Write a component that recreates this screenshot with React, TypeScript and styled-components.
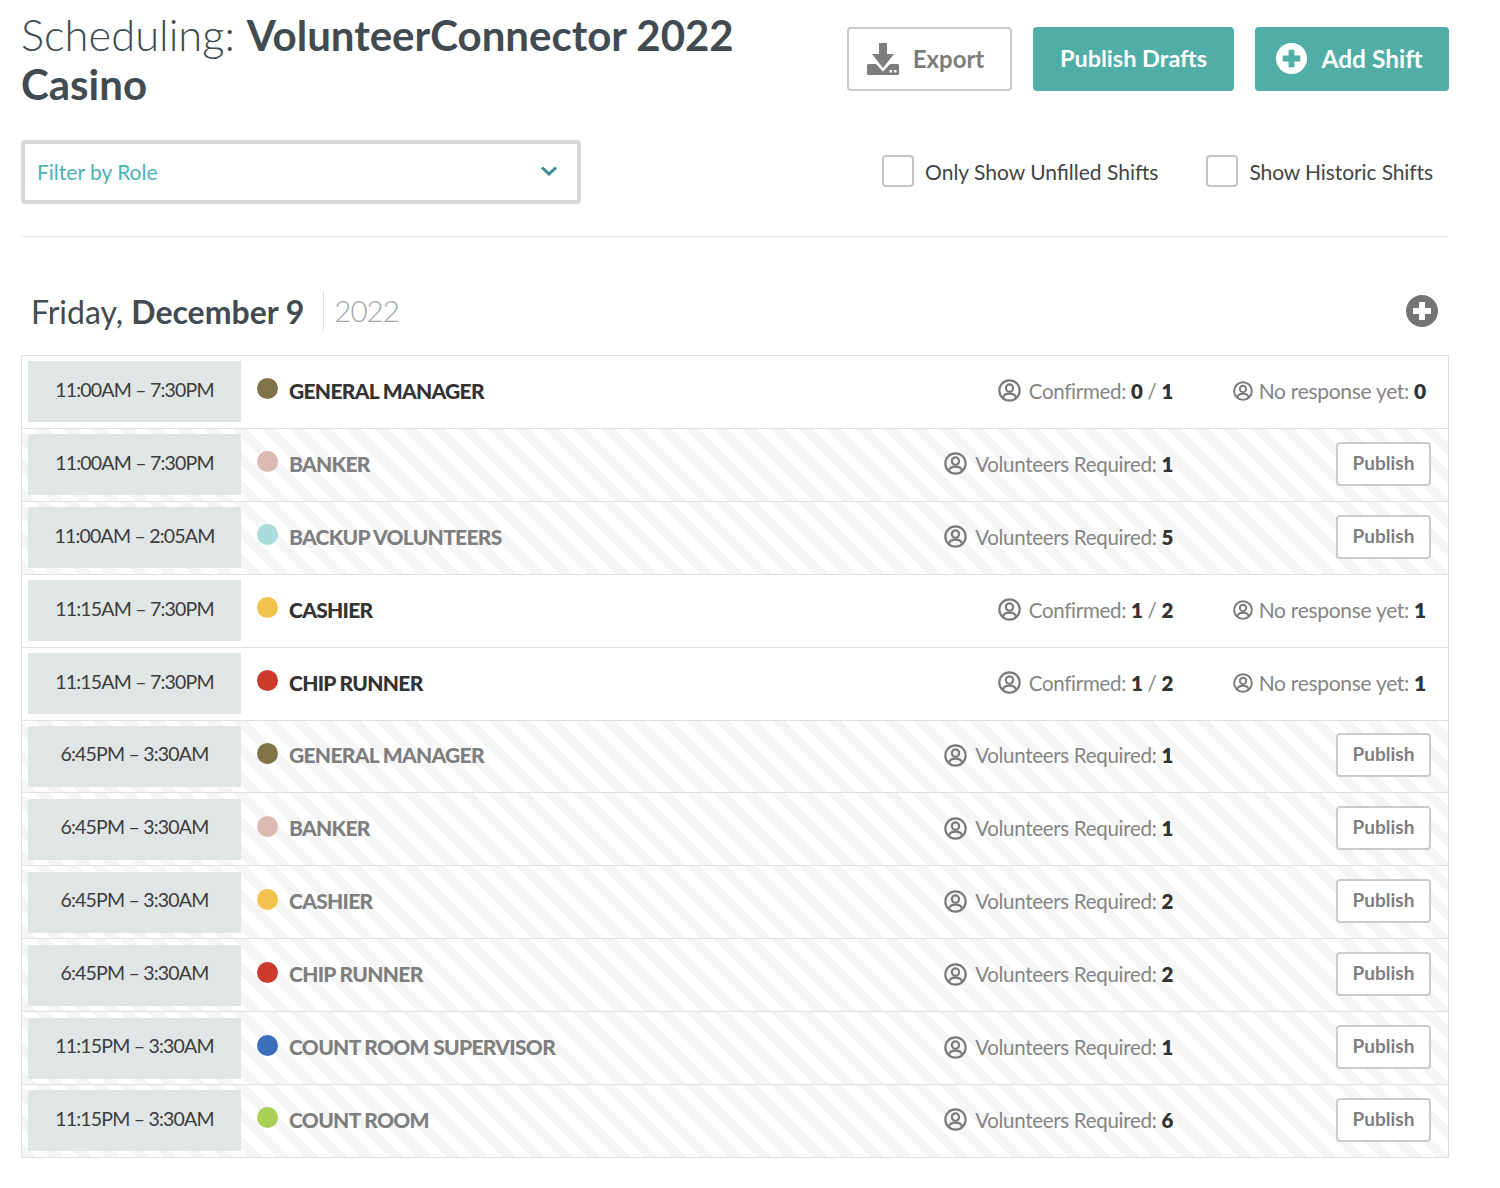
import styled, { createGlobalStyle } from 'styled-components';

const GlobalStyle = createGlobalStyle`
  html, body {
    margin: 0;
    padding: 0;
    background: #fff;
    font-family: Lato, "Liberation Sans", sans-serif;
  }
`;

const Page = styled.div`
  width: 1428px;
  margin-left: 21px;
  padding-top: 10px;
  padding-bottom: 30px;
`;

const Header = styled.header`
  display: flex;
  justify-content: space-between;
  align-items: flex-start;
  height: 119px;
`;

const Title = styled.h1`
  margin: 0;
  width: 780px;
  font-size: 43.5px;
  line-height: 48px;
  font-weight: 300;
  color: #414b51;
  b {
    font-weight: 700;
    font-size: 42px;
  }
`;

const Actions = styled.div`
  display: flex;
  gap: 21px;
  margin-top: 17px;
`;

const ActionButton = styled.button<{
  $primary?: boolean;
  $width: number;
  $nudge?: number;
  $size?: number;
}>`
  display: flex;
  align-items: center;
  justify-content: center;
  gap: 14px;
  width: ${p => p.$width}px;
  height: 64px;
  box-sizing: border-box;
  border-radius: 4px;
  border: 2px solid ${p => (p.$primary ? '#50aea6' : '#c9c9c9')};
  background: ${p => (p.$primary ? '#50aea6' : '#fff')};
  color: ${p => (p.$primary ? '#fff' : '#7d7d7d')};
  font-family: inherit;
  font-size: ${p => p.$size || 23.5}px;
  font-weight: 700;
  padding: 0 ${p => p.$nudge || 0}px 2px 0;
`;

const ExportGlyph = styled.svg`
  margin-top: 2px;
`;

const FilterRow = styled.div`
  display: flex;
  justify-content: space-between;
  align-items: center;
  margin-top: 11px;
  padding-right: 16px;
  padding-bottom: 32px;
  border-bottom: 1px solid #e8e8e8;
`;

const Select = styled.div`
  display: flex;
  align-items: center;
  justify-content: space-between;
  box-sizing: border-box;
  width: 560px;
  height: 64px;
  padding: 0 20px 2px 12px;
  border: 4px solid #d8d8d8;
  border-radius: 4px;
  color: #4fb0b4;
  font-size: 21px;
`;

const Checks = styled.div`
  display: flex;
  gap: 48px;
  margin-bottom: 2px;
`;

const CheckLabel = styled.label<{ $tight?: boolean }>`
  display: flex;
  align-items: center;
  gap: 11px;
  font-size: 21px;
  letter-spacing: ${p => (p.$tight ? '-0.1px' : '0')};
  color: #444;
`;

const CheckBox = styled.span`
  width: 32px;
  height: 32px;
  box-sizing: border-box;
  border: 2px solid #c4c4c4;
  border-radius: 4px;
`;

const DateHeader = styled.div`
  display: flex;
  align-items: center;
  height: 40px;
  margin-top: 54px;
  margin-bottom: 24px;
  padding: 0 11px 0 10px;
`;

const DateText = styled.h2`
  margin: 0;
  padding-right: 19px;
  font-size: 32px;
  font-weight: 400;
  color: #414b51;
  b {
    font-weight: 700;
  }
`;

const YearText = styled.span`
  flex: 1;
  height: 40px;
  line-height: 40px;
  padding-left: 10px;
  border-left: 1px solid #dedede;
  font-size: 29.5px;
  letter-spacing: -1px;
  font-weight: 300;
  color: #a6a6a6;
`;

const Table = styled.div`
  border: 1px solid #e0e0e0;
  border-bottom: 0;
`;

const Row = styled.div<{ $draft?: boolean }>`
  display: flex;
  align-items: center;
  box-sizing: border-box;
  height: 72.91px;
  padding: 5.4px 0 5.51px 6px;
  border-bottom: 1px solid #e0e0e0;
  background: ${p =>
    p.$draft
      ? 'repeating-linear-gradient(45deg, #f5f5f5 0 10px, #fff 10px 20px)'
      : '#fff'};
`;

const TimeBox = styled.div`
  display: flex;
  align-items: center;
  justify-content: center;
  flex: none;
  width: 213px;
  height: 61px;
  padding-bottom: 5px;
  box-sizing: border-box;
  background: #e0e5e6;
  color: #3c3c3c;
  font-size: 19.5px;
  letter-spacing: -0.8px;
`;

const Dot = styled.span<{ $color: string }>`
  flex: none;
  width: 21px;
  height: 21px;
  margin: 0 11px 6px 16px;
  border-radius: 50%;
  background: ${p => p.$color};
`;

const RoleName = styled.div<{ $draft?: boolean }>`
  flex: 1;
  padding-bottom: 3px;
  font-size: 21px;
  font-weight: 900;
  letter-spacing: -0.7px;
  color: ${p => (p.$draft ? '#7f7f7f' : '#333')};
`;

const Stat = styled.div`
  display: flex;
  align-items: center;
  gap: 8px;
  padding-bottom: 2px;
  font-size: 20.5px;
  letter-spacing: -0.3px;
  color: #858585;
  white-space: nowrap;
  b {
    color: #333;
    font-weight: 800;
  }
`;

const Side = styled.div`
  display: flex;
  justify-content: flex-end;
  flex: none;
  width: 275px;
  padding-right: 17px;
  box-sizing: border-box;
`;

const ResponseStat = styled(Stat)`
  gap: 6px;
  padding-right: 5px;
  font-size: 21px;
`;

const PublishButton = styled.button`
  width: 95px;
  height: 44px;
  margin-bottom: 2px;
  box-sizing: border-box;
  border: 2px solid #cbcbcb;
  border-radius: 4px;
  background: #fff;
  color: #7f7f7f;
  font-family: inherit;
  font-size: 19px;
  font-weight: 700;
  padding: 0 0 3px;
`;

const DownloadIcon = () => (
  <ExportGlyph width="32" height="32" viewBox="0 0 32 32" fill="#7d7d7d">
    <path d="M12 0h8v11h7L16 25 5 11h7z" />
    <path d="M1.500 21h7.500l7 7.500 7-7.500h7.500a1.500 1.500 0 0 1 1.500 1.500V30.500a1.500 1.500 0 0 1-1.500 1.500H1.500A1.500 1.500 0 0 1 0 30.500V22.500A1.500 1.500 0 0 1 1.500 21z" />
    <rect x="22.500" y="27" width="2.500" height="2.500" fill="#fff" />
    <rect x="27" y="27" width="2.500" height="2.500" fill="#fff" />
  </ExportGlyph>
);

const PlusCircle = ({ fill, cross, size }: { fill: string; cross: string; size: number }) => (
  <svg width={size} height={size} viewBox="0 0 32 32">
    <circle cx="16" cy="16" r="16" fill={fill} />
    <path d="M13 7h6v6h6v6h-6v6h-6v-6H7v-6h6z" fill={cross} />
  </svg>
);

const PersonIcon = ({ size }: { size: number }) => (
  <svg width={size} height={size} viewBox="0 0 24 24" fill="none" stroke="#7a7a7a" strokeWidth="2.3">
    <circle cx="12" cy="12" r="10.6" />
    <circle cx="12" cy="9.500" r="3.800" />
    <path d="M5.200 19.500c.6-2.800 3.400-4.200 6.800-4.200s6.200 1.400 6.800 4.200" />
  </svg>
);

type Shift = {
  time: string;
  color: string;
  role: string;
  required?: number;
  confirmed?: string;
  noResponse?: number;
};

const olive = '#7f7548';
const rose = '#dcb9b1';
const aqua = '#aadcdc';
const amber = '#f3c24c';
const red = '#cb3a2b';
const blue = '#3b6fbe';
const lime = '#a9d155';

const shifts: Shift[] = [
  { time: '11:00AM – 7:30PM', color: olive, role: 'GENERAL MANAGER', confirmed: '0 / 1', noResponse: 0 },
  { time: '11:00AM – 7:30PM', color: rose, role: 'BANKER', required: 1 },
  { time: '11:00AM – 2:05AM', color: aqua, role: 'BACKUP VOLUNTEERS', required: 5 },
  { time: '11:15AM – 7:30PM', color: amber, role: 'CASHIER', confirmed: '1 / 2', noResponse: 1 },
  { time: '11:15AM – 7:30PM', color: red, role: 'CHIP RUNNER', confirmed: '1 / 2', noResponse: 1 },
  { time: '6:45PM – 3:30AM', color: olive, role: 'GENERAL MANAGER', required: 1 },
  { time: '6:45PM – 3:30AM', color: rose, role: 'BANKER', required: 1 },
  { time: '6:45PM – 3:30AM', color: amber, role: 'CASHIER', required: 2 },
  { time: '6:45PM – 3:30AM', color: red, role: 'CHIP RUNNER', required: 2 },
  { time: '11:15PM – 3:30AM', color: blue, role: 'COUNT ROOM SUPERVISOR', required: 1 },
  { time: '11:15PM – 3:30AM', color: lime, role: 'COUNT ROOM', required: 6 },
];

const ShiftRow = ({ shift }: { shift: Shift }) => {
  const draft = shift.required !== undefined;
  const [done, total] = (shift.confirmed || '').split(' / ');
  return (
    <Row $draft={draft}>
      <TimeBox>{shift.time}</TimeBox>
      <Dot $color={shift.color} />
      <RoleName $draft={draft}>{shift.role}</RoleName>
      <Stat>
        <PersonIcon size={23} />
        {draft ? (
          <span>
            Volunteers Required: <b>{shift.required}</b>
          </span>
        ) : (
          <span>
            Confirmed: <b>{done}</b> / <b>{total}</b>
          </span>
        )}
      </Stat>
      <Side>
        {draft ? (
          <PublishButton>Publish</PublishButton>
        ) : (
          <ResponseStat>
            <PersonIcon size={20} />
            <span>
              No response yet: <b>{shift.noResponse}</b>
            </span>
          </ResponseStat>
        )}
      </Side>
    </Row>
  );
};

export default function App() {
  return (
    <Page>
      <GlobalStyle />
      <Header>
        <Title>
          Scheduling: <b>VolunteerConnector 2022</b> <b>Casino</b>
        </Title>
        <Actions>
          <ActionButton $width={165} $nudge={8} $size={24}>
            <DownloadIcon />
            Export
          </ActionButton>
          <ActionButton $primary $width={201}>
            Publish Drafts
          </ActionButton>
          <ActionButton $primary $width={194} $nudge={5} $size={24.5}>
            <PlusCircle size={31} fill="#fff" cross="#50aea6" />
            Add Shift
          </ActionButton>
        </Actions>
      </Header>
      <FilterRow>
        <Select>
          Filter by Role
          <svg width="16" height="10" viewBox="0 0 16 10" fill="none" stroke="#38918c" strokeWidth="3">
            <path d="M1 1.500l7 6.500 7-6.500" />
          </svg>
        </Select>
        <Checks>
          <CheckLabel>
            <CheckBox />
            Only Show Unfilled Shifts
          </CheckLabel>
          <CheckLabel $tight>
            <CheckBox />
            Show Historic Shifts
          </CheckLabel>
        </Checks>
      </FilterRow>
      <DateHeader>
        <DateText>
          Friday, <b>December 9</b>
        </DateText>
        <YearText>2022</YearText>
        <PlusCircle size={32} fill="#757575" cross="#fff" />
      </DateHeader>
      <Table>
        {shifts.map((shift, i) => (
          <ShiftRow key={i} shift={shift} />
        ))}
      </Table>
    </Page>
  );
}
